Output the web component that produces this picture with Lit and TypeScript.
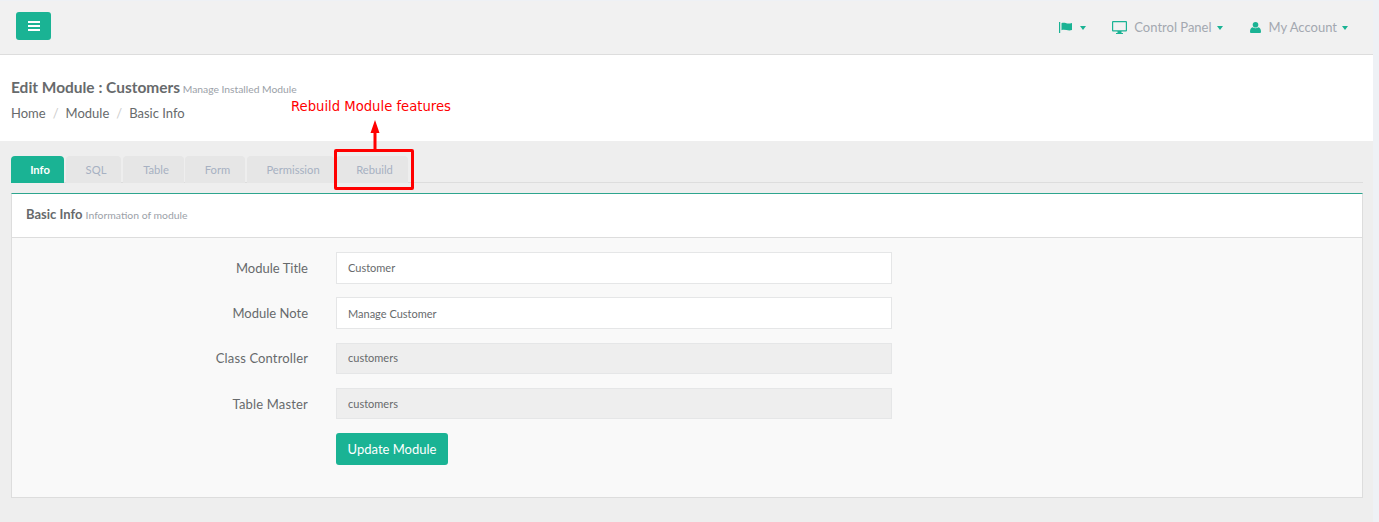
import { LitElement, html, css } from "lit";
import { customElement } from "lit/decorators.js";

@customElement("app-root")
export class AppRoot extends LitElement {
  static styles = css`
    :host { display: block; width: 1379px; height: 522px; overflow: hidden; background: #eef1f5; font-family: Lato, sans-serif; color: #676a6c; }
    .page { width: 1373px; height: 521px; margin-top: 1px; background: #eeeeee; }
    .top { height: 53px; background: #f1f1f1; border-bottom: 1px solid #dddddd; box-sizing: content-box; display: flex; align-items: flex-start; justify-content: space-between; padding: 0 25px 0 16px; }
    .burger { margin-top: 11px; width: 35px; height: 28px; background: #1ab394; border-radius: 3px; display: flex; align-items: center; justify-content: center; }
    .nav { display: flex; align-items: center; height: 52px; font-size: 13px; color: #a3a8b0; }
    .nav-item { display: flex; align-items: center; }
    .flag { margin-right: 26px; }
    .panel { margin-right: 27px; }
    .ic { display: block; }
    .ic-flag { margin-right: 2px; }
    .ic-mon { margin-right: 7px; }
    .ic-user { margin-right: 8px; }
    .caret { width: 0; height: 0; border-left: 3.5px solid transparent; border-right: 3.5px solid transparent; border-top: 4px solid #1ab394; margin-left: 5px; margin-top: 2px; }
    .head { height: 86px; background: #fff; padding: 0 11px; box-sizing: border-box; }
    h1 { margin: 0; padding-top: 23px; font-size: 15.46px; line-height: 18px; font-weight: 700; color: #676a6c; }
    h1 small { font-size: 10.3px; font-weight: 400; color: #9ba1a8; margin-left: -1px; }
    .crumb { margin-top: 7px; font-size: 13px; line-height: 17px; display: flex; color: #676a6c; }
    .crumb i { font-style: normal; color: #cccccc; padding: 0 7px; }
    .body { position: relative; padding: 15px 10px 0 11px; }
    .tabs { display: flex; height: 27px; gap: 2px; border-bottom: 1px solid #dddddd; box-sizing: border-box; }
    .tab { height: 27px; flex: none; box-sizing: border-box; padding-left: 5px; background: #e6e6e6; border-radius: 4px 4px 0 0; font-size: 11.2px; font-weight: 400; line-height: 27px; text-align: center; color: #a7b1c2; }
    .tab:nth-child(4) { margin-left: -1px; }
    .tab.on { background: #1ab394; color: #fff; font-weight: 700; }
    .card { margin-top: 10px; border: 1px solid #dddddd; border-top: 1px solid #2da58e; background: #f9f9f9; height: 305px; box-sizing: border-box; }
    .card-h { height: 43px; background: #fff; border-bottom: 1px solid #dddddd; box-sizing: content-box; padding-left: 14px; font-size: 13px; line-height: 41px; font-weight: 700; color: #676a6c; }
    .card-h small { font-size: 10.4px; font-weight: 400; color: #9ba1a8; }
    .form { padding-top: 14px; display: flex; flex-direction: column; }
    .row { display: grid; grid-template-columns: 296px 556px; column-gap: 28px; align-items: center; margin-bottom: 14px; }
    .row:first-child { margin-bottom: 13px; }
    .row label { text-align: right; font-size: 13px; color: #676a6c; }
    .input { height: 32px; box-sizing: border-box; background: #fff; border: 1px solid #e5e6e7; padding: 0 11px; font-size: 11px; display: flex; align-items: center; color: #676a6c; }
    .input.ro { background: #eeeeee; height: 31px; }
    .row:first-child .input, .row:nth-child(3) .input { padding-bottom: 2px; }
    .row:nth-child(3) label { margin-bottom: 2px; letter-spacing: 0.13px; }
    .row:nth-child(4) label { letter-spacing: 0.17px; }
    .btn { margin-left: 324px; width: 112px; height: 32px; background: #1ab394; color: #fff; border-radius: 3px; font-size: 13px; display: flex; align-items: center; justify-content: center; }
    .note { position: absolute; left: 291px; top: -42px; color: #ff0000; font: 13.2px/16px "DejaVu Sans", sans-serif; }
    .hl { position: absolute; left: 334px; top: 8px; width: 80px; height: 41px; box-sizing: border-box; border: 3px solid #ff0000; border-radius: 2px; }
    .arrow { position: absolute; left: 370px; top: -21px; display: block; }
  `;

  private row(label: string, value: string, ro = false) {
    return html`<div class="row"><label>${label}</label><div class="input ${ro ? "ro" : ""}">${value}</div></div>`;
  }

  render() {
    const tabs: [string, number][] = [["SQL", 55], ["Table", 61], ["Form", 60], ["Permission", 87], ["Rebuild", 72]];
    return html`
      <div class="page">
        <div class="top">
          <div class="burger">
            <svg width="12" height="10" viewBox="0 0 12 10"><path fill="#fff" d="M0 0h12v2H0zM0 4h12v2H0zM0 8h12v2H0z"/></svg>
          </div>
          <div class="nav">
            <div class="nav-item flag">
              <svg class="ic ic-flag" width="14" height="11" viewBox="0 0 14 11"><path fill="#1ab394" d="M0 0h1.200v11H0zM2.500 1.200c3-1.200 5 1 8.500.2l2-.4v7c-4 1.300-7-1-10.500.2z"/></svg>
              <span class="caret"></span>
            </div>
            <div class="nav-item panel">
              <svg class="ic ic-mon" width="15" height="13" viewBox="0 0 15 13"><path fill="#1ab394" d="M1 0h13a1 1 0 0 1 1 1v8.500a1 1 0 0 1-1 1H9.500V12H11v1H4v-1h1.500v-1.500H1a1 1 0 0 1-1-1V1a1 1 0 0 1 1-1zm.2 1.200v8h12.600v-8z"/></svg>
              Control Panel<span class="caret"></span>
            </div>
            <div class="nav-item">
              <svg class="ic ic-user" width="11" height="11" viewBox="0 0 11 11"><circle cx="5.500" cy="2.800" r="2.800" fill="#1ab394"/><path fill="#1ab394" d="M1 11a1 1 0 0 1-1-1c0-2.800 1-4.400 2.700-4.700 1.700 1.300 3.900 1.300 5.600 0C10 5.600 11 7.200 11 10a1 1 0 0 1-1 1z"/></svg>
              My Account<span class="caret"></span>
            </div>
          </div>
        </div>
        <div class="head">
          <h1>Edit Module : Customers <small>Manage Installed Module</small></h1>
          <div class="crumb"><span>Home</span><i>/</i><span>Module</span><i>/</i><span>Basic Info</span></div>
        </div>
        <div class="body">
          <div class="tabs">
            <div class="tab on" style="width:53px">Info</div>
            ${tabs.map(([t, w]) => html`<div class="tab" style="width:${w}px">${t}</div>`)}
          </div>
          <div class="card">
            <div class="card-h">Basic Info <small>Information of module</small></div>
            <div class="form">
              ${this.row("Module Title", "Customer")}
              ${this.row("Module Note", "Manage Customer")}
              ${this.row("Class Controller", "customers", true)}
              ${this.row("Table Master", "customers", true)}
              <div class="btn">Update Module</div>
            </div>
          </div>
          <div class="note">Rebuild Module features</div>
          <svg class="arrow" width="10" height="30" viewBox="0 0 10 30"><path fill="#ff0000" d="M5 0l4.500 13H6.500v17h-3V13H.5z"/></svg>
          <div class="hl"></div>
        </div>
      </div>
    `;
  }
}
